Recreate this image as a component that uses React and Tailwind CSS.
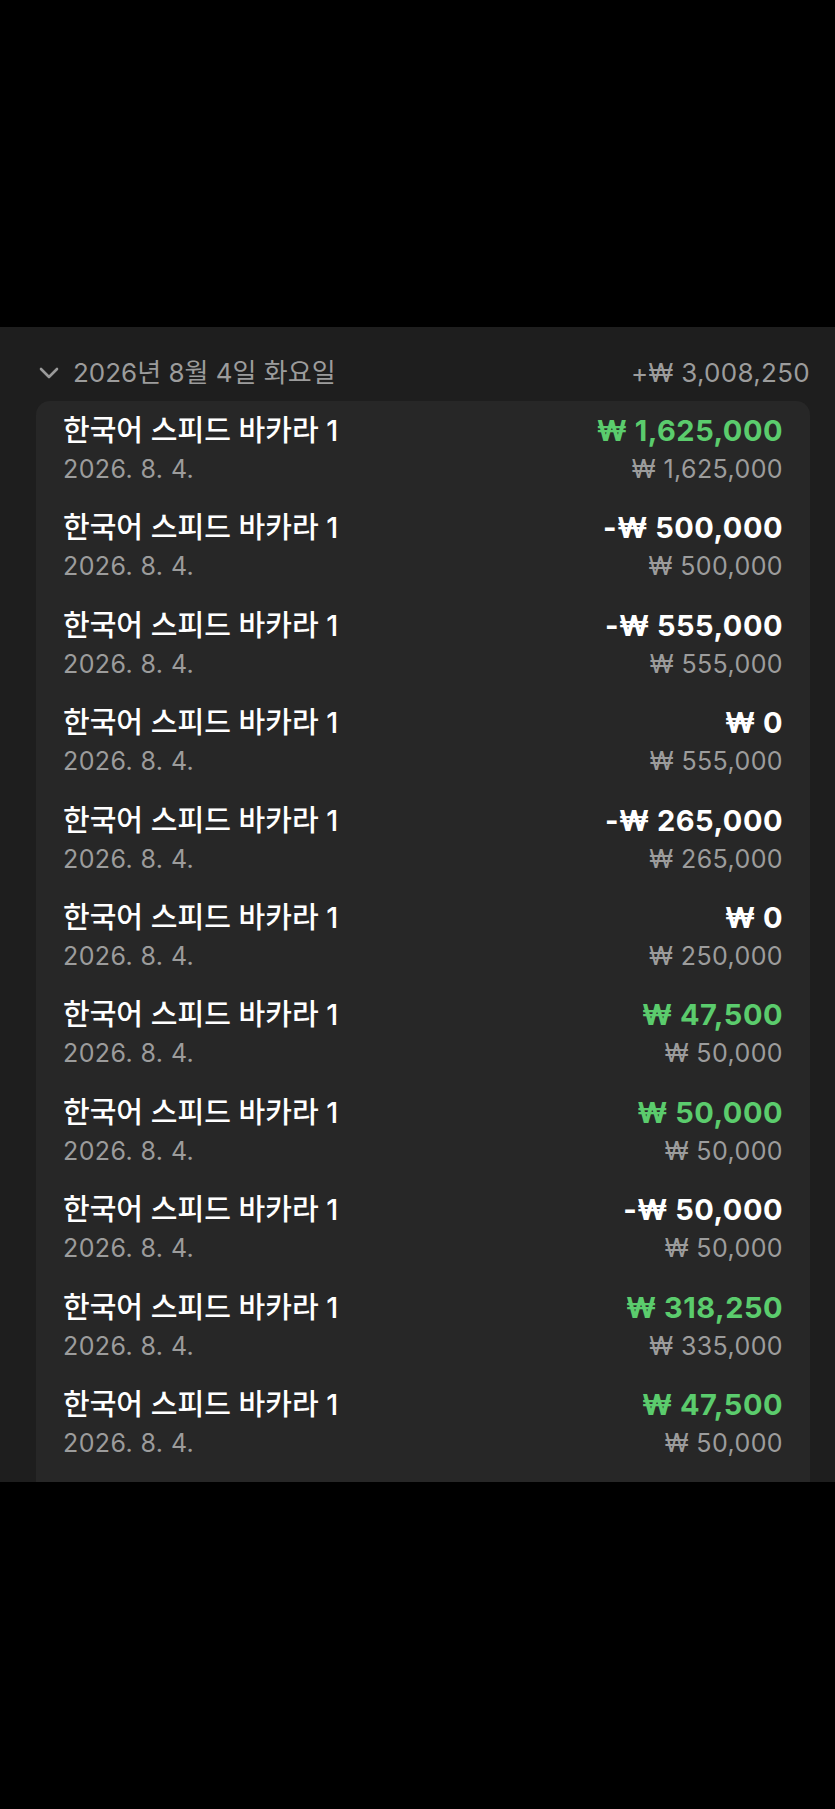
import React from "react";

const rows = [
  { amt: "₩ 1,625,000", sub: "₩ 1,625,000", color: "green" },
  { amt: "-₩ 500,000", sub: "₩ 500,000", color: "white" },
  { amt: "-₩ 555,000", sub: "₩ 555,000", color: "white" },
  { amt: "₩ 0", sub: "₩ 555,000", color: "white" },
  { amt: "-₩ 265,000", sub: "₩ 265,000", color: "white" },
  { amt: "₩ 0", sub: "₩ 250,000", color: "white" },
  { amt: "₩ 47,500", sub: "₩ 50,000", color: "green" },
  { amt: "₩ 50,000", sub: "₩ 50,000", color: "green" },
  { amt: "-₩ 50,000", sub: "₩ 50,000", color: "white" },
  { amt: "₩ 318,250", sub: "₩ 335,000", color: "green" },
  { amt: "₩ 47,500", sub: "₩ 50,000", color: "green" },
];

export default function App() {
  return (
    <div className="w-[835px] h-[1809px] bg-black flex flex-col font-['Inter','Noto_Sans_CJK_KR',sans-serif]">
      <div className="h-[327px] shrink-0" />
      <div className="h-[1155px] shrink-0 bg-[#1e1e1e] overflow-hidden flex flex-col">
        <div className="flex items-center justify-between pt-[28px] pb-[10px] pl-[38px] pr-[25px]">
          <div className="flex items-center h-[36px]">
            <svg width="22" height="14" viewBox="0 0 22 14" className="mr-[13px]">
              <path d="M3 3 L11 11 L19 3" fill="none" stroke="#9a9a9a" strokeWidth="2.6" strokeLinecap="round" strokeLinejoin="round" />
            </svg>
            <span className="text-[26px] leading-[36px] text-[#9c9c9c]">2026년 8월 4일 화요일</span>
          </div>
          <span className="text-[26px] leading-[36px] text-[#9c9c9c] tracking-[0.3px]">+₩ 3,008,250</span>
        </div>
        <div className="ml-[36px] mr-[25px] rounded-t-[14px] bg-[#272727] px-[27px] pb-[20px]">
          {rows.map((r, i) => (
            <div key={i} className="h-[97.4px] flex justify-between pt-[12px]">
              <div className="flex flex-col">
                <span className="text-[29px] leading-[36px] font-medium text-white">한국어 스피드 바카라 1</span>
                <span className="text-[25px] leading-[40px] text-[#9c9c9c] tracking-[0.4px]">2026. 8. 4.</span>
              </div>
              <div className="flex flex-col items-end">
                <span
                  className={
                    r.color === "green"
                      ? "text-[29px] leading-[36px] font-bold text-[#5bcc6d] tracking-[0.5px]"
                      : "text-[29px] leading-[36px] font-bold text-white tracking-[0.5px]"
                  }
                >
                  {r.amt}
                </span>
                <span className="text-[25px] leading-[40px] text-[#9c9c9c] tracking-[0.4px]">{r.sub}</span>
              </div>
            </div>
          ))}
        </div>
      </div>
    </div>
  );
}
